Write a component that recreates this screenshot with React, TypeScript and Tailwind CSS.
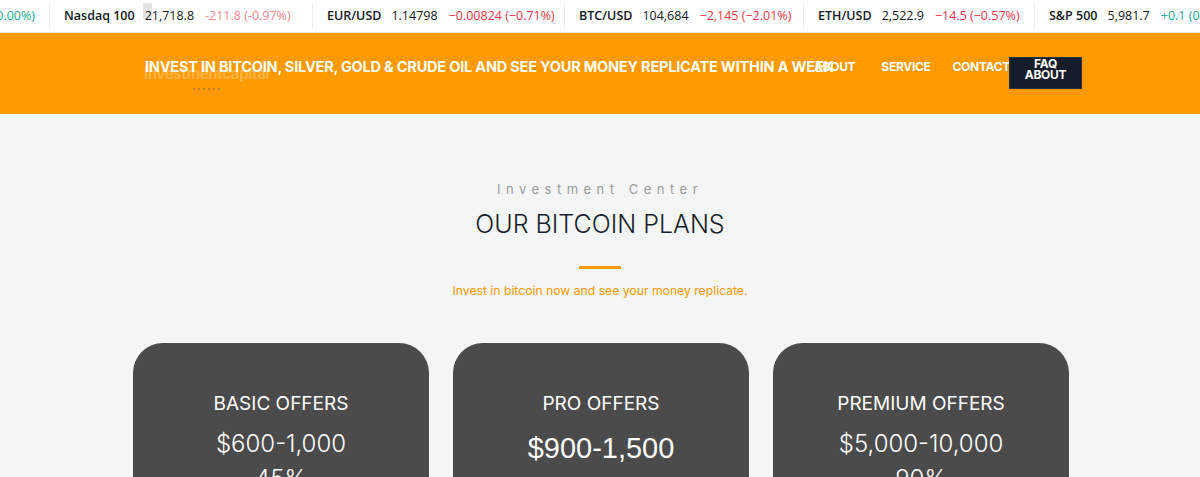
import React from "react";

const tickers = [
  { label: "Nasdaq 100", value: "21,718.8", change: "-211.8 (-0.97%)", up: false, w: "w-[263px]", faded: true, flash: true },
  { label: "EUR/USD", value: "1.14798", change: "−0.00824 (−0.71%)", up: false, w: "w-[252px]" },
  { label: "BTC/USD", value: "104,684", change: "−2,145 (−2.01%)", up: false, w: "w-[239px]" },
  { label: "ETH/USD", value: "2,522.9", change: "−14.5 (−0.57%)", up: false, w: "w-[231px]" },
  { label: "S&P 500", value: "5,981.7", change: "+0.1 (0.00%)", up: true, w: "w-[250px]" },
];

const plans = [
  { name: "BASIC OFFERS", price: "$600-1,000", rate: "45%" },
  { name: "PRO OFFERS", price: "$900-1,500", rate: "70%", arial: true },
  { name: "PREMIUM OFFERS", price: "$5,000-10,000", rate: "90%" },
];

export default function App() {
  return (
    <div className="min-h-screen bg-[#f4f5f5] font-['Inter',sans-serif] overflow-hidden">
      {/* Ticker tape */}
      <div className="h-[33px] bg-white border-b border-[#e6e6e6] flex items-center overflow-hidden whitespace-nowrap font-['Open_Sans',sans-serif] text-[12.5px]">
        <div className="w-[50px] shrink-0 flex justify-end pr-[14px] border-r border-[#eeeeee] h-[24px] items-center">
          <span className="text-[#22ab94]">0.00%)</span>
        </div>
        {tickers.map((t) => (
          <div
            key={t.label}
            className={`${t.w} shrink-0 flex items-center h-[24px] pl-[14px] border-r border-[#eeeeee]`}
          >
            <span className="font-semibold text-[#131722]">{t.label}</span>
            <span className="ml-[10px] text-[#131722] relative">
              {t.flash && <span className="absolute left-[-2px] top-[-4px] w-[9px] h-[16px] bg-[#e3e3e3]" />}
              <span className="relative">{t.value}</span>
            </span>
            <span className={`ml-[11px] ${t.up ? "text-[#22ab94]" : t.faded ? "text-[#f7848e]" : "text-[#f23645]"}`}>
              {t.change}
            </span>
          </div>
        ))}
      </div>

      {/* Header */}
      <header className="h-[81px] bg-[#fe9900] relative">
        <div className="max-w-[936px] mx-auto h-full flex items-center justify-between pl-[12px]">
          {/* faint logo */}
          <div className="flex flex-col items-center opacity-25 mt-[6px]">
            <span className="text-white font-bold text-[15px] tracking-tight">investmentcapital</span>
            <span className="flex gap-[3px] mt-[2px]">
              {[0, 1, 2, 3, 4, 5].map((i) => (
                <span key={i} className="w-[2px] h-[2px] bg-[#2b3a9e]" />
              ))}
            </span>
          </div>
          <nav className="flex items-start h-[32px] -mr-[14px] mt-[-2px] text-white font-bold text-[12px] tracking-tight">
            <span className="mt-[1px] mr-[26px]">ABOUT</span>
            <span className="mt-[1px] mr-[22px]">SERVICE</span>
            <span className="mt-[1px]">CONTACT</span>
            <div className="w-[73px] h-[32px] bg-[#161d2a] border border-[#2a3140] flex flex-col items-center leading-[11px] -ml-[1px]">
              <span>FAQ</span>
              <span>ABOUT</span>
            </div>
          </nav>
        </div>
        {/* scrolling headline over the bar */}
        <div className="absolute left-[145px] top-[23px] text-white font-bold text-[14.5px] whitespace-nowrap tracking-[-0.2px]">
          INVEST IN BITCOIN, SILVER, GOLD &amp; CRUDE OIL AND SEE YOUR MONEY REPLICATE WITHIN A WEEK
        </div>
      </header>

      {/* Plans */}
      <section className="pt-[66px] flex flex-col items-center">
        <p className="text-[13px] text-[#9b9b9b] tracking-[5.5px]">Investment Center</p>
        <h2 className="mt-[6px] text-[25px] text-[#1a1f2b] font-light">OUR BITCOIN PLANS</h2>
        <div className="mt-[23px] w-[42px] h-[3px] bg-[#fe9900]" />
        <p className="mt-[13px] text-[12.2px] text-[#fe9900]">Invest in bitcoin now and see your money replicate.</p>

        <div className="mt-[43px] flex gap-[24px] ml-[2px]">
          {plans.map((p) => (
            <div key={p.name} className="w-[296px] h-[200px] bg-[#4b4b4b] rounded-[30px] flex flex-col items-center pt-[47px] text-white">
              <h3 className="text-[19px] font-normal">{p.name}</h3>
              {p.arial ? (
                <p className="mt-[8px] text-[29px] font-['Liberation_Sans',sans-serif]">{p.price}</p>
              ) : (
                <p className="mt-[7px] text-[24px] font-light">{p.price}</p>
              )}
              <p className="mt-[-1px] text-[24px] font-light">{p.rate}</p>
            </div>
          ))}
        </div>
      </section>
    </div>
  );
}
